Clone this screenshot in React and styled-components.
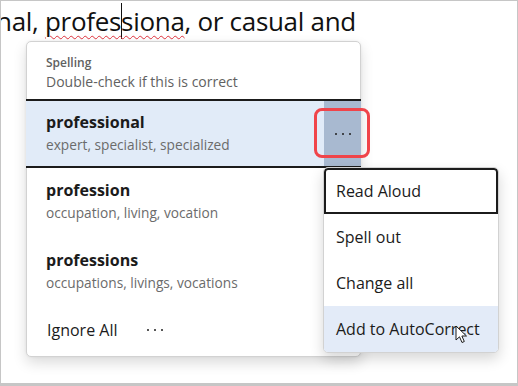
import { createGlobalStyle, styled } from 'styled-components';

const GlobalStyle = createGlobalStyle`
  html, body {
    margin: 0;
    padding: 0;
    background: #ffffff;
  }
  body {
    font-family: 'Open Sans', 'Noto Sans', sans-serif;
    color: #1f1f1f;
  }
`;

const Frame = styled.div`
  position: relative;
  width: 518px;
  height: 386px;
  box-sizing: border-box;
  border: 1px solid #c6c6c6;
  border-bottom-width: 3px;
  background: #ffffff;
  overflow: hidden;
`;

const DocLine = styled.div`
  margin-left: -5px;
  font-size: 26px;
  line-height: 40px;
  white-space: nowrap;
  color: #111111;
  letter-spacing: -0.3px;
`;

const Misspelled = styled.span`
  text-decoration: underline wavy #e0323c;
  text-decoration-thickness: 1px;
  text-underline-offset: 4px;
`;

const Caret = styled.span`
  display: inline-block;
  width: 1px;
  height: 36px;
  margin: 0 -1px -8px 0;
  background: #111111;
`;

// spelling popup, floats over the document
const Card = styled.div`
  position: absolute;
  left: 25px;
  top: 40px;
  width: 335px;
  height: 316px;
  box-sizing: border-box;
  background: #ffffff;
  border: 1px solid #d2d2d2;
  border-radius: 5px;
  box-shadow: 0 6px 14px rgba(0, 0, 0, 0.14), 0 0 3px rgba(0, 0, 0, 0.06);
  display: flex;
  flex-direction: column;
`;

const Header = styled.div`
  padding: 12px 19px 0;
  height: 57px;
  box-sizing: border-box;
  color: #616161;
`;

const HeaderTitle = styled.div`
  font-size: 12px;
  font-weight: 600;
  line-height: 18px;
`;

const HeaderHint = styled.div`
  font-size: 14px;
  line-height: 20px;
`;

const Suggestion = styled.div`
  display: flex;
  align-items: stretch;
  height: ${(p) => p.$h}px;
  box-sizing: border-box;
  margin: 0 -1px;
  background: ${(p) => (p.$selected ? '#e1ebf8' : 'transparent')};
  border-top: ${(p) => (p.$selected ? '2px solid #1b1b1b' : 'none')};
  border-bottom: ${(p) => (p.$selected ? '2px solid #1b1b1b' : 'none')};
`;

const SuggestionText = styled.div`
  flex: 1;
  padding: ${(p) => p.$top}px 0 0 20px;
`;

const Word = styled.div`
  font-size: 16px;
  font-weight: 700;
  line-height: 24px;
  color: #1b1b1b;
`;

const Synonyms = styled.div`
  font-size: 13.7px;
  line-height: 22px;
  color: #6b6b6b;
`;

const MoreButton = styled.div`
  position: relative;
  width: 37px;
  background: #a8b9d0;
  display: flex;
  align-items: center;
  justify-content: center;
`;

const Dots = styled.span`
  display: flex;
  gap: 5px;
`;

const Dot = styled.i`
  width: 2px;
  height: 2px;
  border-radius: 1px;
  background: #1f1f1f;
`;

const Highlight = styled.div`
  position: absolute;
  left: -10px;
  top: 7px;
  width: 56px;
  height: 50px;
  box-sizing: border-box;
  border: 3px solid #f0444a;
  border-radius: 8px;
`;

const Footer = styled.div`
  display: flex;
  align-items: center;
  gap: 30px;
  padding: 13px 20px 0;
  font-size: 16px;
  line-height: 24px;
  color: #1b1b1b;
`;

const Submenu = styled.div`
  position: absolute;
  left: 322px;
  top: 166px;
  width: 176px;
  box-sizing: border-box;
  background: #ffffff;
  border: 1px solid #d2d2d2;
  border-radius: 5px;
  box-shadow: 0 6px 14px rgba(0, 0, 0, 0.16);
  overflow: hidden;
`;

const MenuItem = styled.div`
  height: 46px;
  box-sizing: border-box;
  display: flex;
  align-items: center;
  font-size: 16px;
  color: #1b1b1b;
  white-space: nowrap;
  background: ${(p) => (p.$hover ? '#e3ebf8' : '#ffffff')};
  border: ${(p) => (p.$focus ? '2px solid #1b1b1b' : 'none')};
  border-radius: ${(p) => (p.$focus ? '4px 4px 0 0' : '0')};
  padding-left: ${(p) => (p.$focus ? '10px' : '12px')};
`;

const Pointer = styled.svg`
  position: absolute;
  left: 454px;
  top: 324px;
`;

const suggestions = [
  { word: 'professional', syn: 'expert, specialist, specialized', selected: true, h: 69, top: 9 },
  { word: 'profession', syn: 'occupation, living, vocation', h: 69, top: 10 },
  { word: 'professions', syn: 'occupations, livings, vocations', h: 68, top: 11 },
];

function MoreDots() {
  return (
    <Dots>
      <Dot />
      <Dot />
      <Dot />
    </Dots>
  );
}

export default function App() {
  return (
    <>
      <GlobalStyle />
      <Frame>
        <DocLine>
          nal, <Misspelled>profes<Caret />siona</Misspelled>, or casual and
        </DocLine>

        <Card>
          <Header>
            <HeaderTitle>Spelling</HeaderTitle>
            <HeaderHint>Double-check if this is correct</HeaderHint>
          </Header>
          {suggestions.map((s) => (
            <Suggestion key={s.word} $selected={s.selected} $h={s.h}>
              <SuggestionText $top={s.top}>
                <Word>{s.word}</Word>
                <Synonyms>{s.syn}</Synonyms>
              </SuggestionText>
              {s.selected && (
                <MoreButton>
                  <MoreDots />
                  <Highlight />
                </MoreButton>
              )}
            </Suggestion>
          ))}
          <Footer>
            <span>Ignore All</span>
            <MoreDots />
          </Footer>
        </Card>

        <Submenu>
          <MenuItem $focus>Read Aloud</MenuItem>
          <MenuItem>Spell out</MenuItem>
          <MenuItem>Change all</MenuItem>
          <MenuItem $hover>Add to AutoCorrect</MenuItem>
        </Submenu>

        <Pointer width="14" height="20" viewBox="0 0 14 20">
          <path
            d="M1 1 L1 15 L4.5 11.8 L7 17.5 L9.3 16.5 L6.9 11 L11.5 11 Z"
            fill="#ffffff"
            stroke="#1b1b1b"
            strokeWidth="1"
            strokeLinejoin="round"
          />
        </Pointer>
      </Frame>
    </>
  );
}
